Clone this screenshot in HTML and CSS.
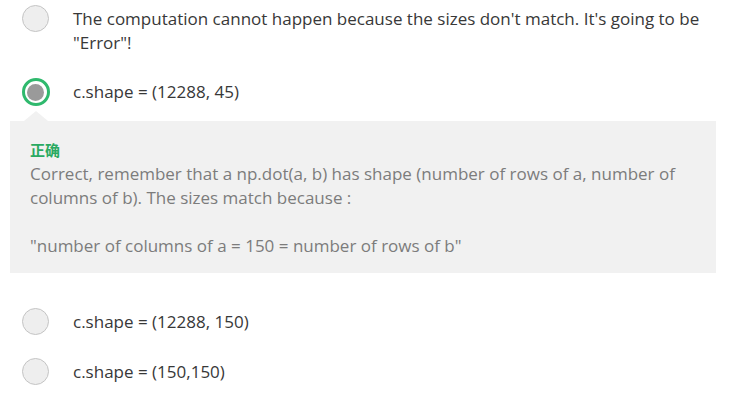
FILE: index.html
```html
<!DOCTYPE html>
<html>
<head>
<meta charset="utf-8">
<link rel="stylesheet" href="styles.css">
</head>
<body>
<div class="quiz">
  <div class="option">
    <span class="radio"></span>
    <div class="label">The computation cannot happen because the sizes don't match. It's going to be "Error"!</div>
  </div>
  <div class="option">
    <span class="radio checked"><span class="dot"></span></span>
    <div class="label">c.shape = (12288, 45)</div>
  </div>
  <div class="feedback">
    <div class="verdict">正确</div>
    <p class="explain">Correct, remember that a np.dot(a, b) has shape (number of rows of a, number of columns of b). The sizes match because :</p>
    <p class="explain quote">"number of columns of a = 150 = number of rows of b"</p>
  </div>
  <div class="option">
    <span class="radio"></span>
    <div class="label">c.shape = (12288, 150)</div>
  </div>
  <div class="option">
    <span class="radio"></span>
    <div class="label">c.shape = (150,150)</div>
  </div>
</div>
</body>
</html>
```
FILE: styles.css
```css
html, body {
  margin: 0;
  padding: 0;
  background: #ffffff;
}
body {
  font-family: "Open Sans", "Noto Sans CJK SC", sans-serif;
  font-size: 17px;
  line-height: 24px;
}
.quiz {
  display: flex;
  flex-direction: column;
  padding-top: 7px;
  width: 716px;
}
.option {
  display: flex;
  align-items: flex-start;
  padding-left: 22px;
  margin-bottom: 25px;
}
.radio {
  flex: none;
  box-sizing: border-box;
  width: 27px;
  height: 27px;
  margin-top: -2px;
  border-radius: 50%;
  border: 1.5px solid #c4c4c4;
  background: #eeeeee;
  display: flex;
  align-items: center;
  justify-content: center;
}
.radio.checked {
  border: 3px solid #2fb96d;
  background: #ffffff;
  width: 28px;
  height: 28px;
  margin-left: -0.5px;
  margin-right: -0.5px;
}
.dot {
  width: 17px;
  height: 17px;
  border-radius: 50%;
  background: #9a9a9a;
}
.label {
  margin-left: 24px;
  color: #383838;
}
.feedback {
  position: relative;
  margin: -10px 0 37px 10px;
  background: #f1f1f1;
  padding: 18px 20px 15px 20px;
}
.feedback::before {
  content: "";
  position: absolute;
  left: 14px;
  top: -10px;
  border-left: 12px solid transparent;
  border-right: 12px solid transparent;
  border-bottom: 10px solid #f1f1f1;
}
.verdict {
  color: #2aaa62;
  font-weight: 700;
  font-size: 15px;
  line-height: 23px;
}
.explain {
  margin: 0;
  color: #7c7c7c;
}
.quote {
  margin-top: 24px;
}
```
